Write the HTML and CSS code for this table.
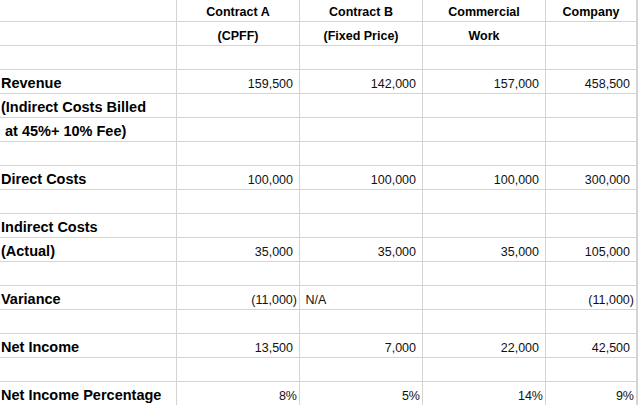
FILE: index.html
```html
<!DOCTYPE html>
<html>
<head>
<meta charset="utf-8">
<link rel="stylesheet" href="styles.css">
</head>
<body>
<div class="sheet">
  <div class="c"></div><div class="c hd">Contract A</div><div class="c hd">Contract B</div><div class="c hd">Commercial</div><div class="c hd">Company</div><div class="c"></div>
  <div class="c"></div><div class="c hd">(CPFF)</div><div class="c hd">(Fixed Price)</div><div class="c hd">Work</div><div class="c"></div><div class="c"></div>
  <div class="c"></div><div class="c"></div><div class="c"></div><div class="c"></div><div class="c"></div><div class="c"></div>
  <div class="c lbl">Revenue</div><div class="c num">159,500</div><div class="c num">142,000</div><div class="c num">157,000</div><div class="c num">458,500</div><div class="c"></div>
  <div class="c lbl">(Indirect Costs Billed</div><div class="c"></div><div class="c"></div><div class="c"></div><div class="c"></div><div class="c"></div>
  <div class="c lbl"> at 45%+ 10% Fee)</div><div class="c"></div><div class="c"></div><div class="c"></div><div class="c"></div><div class="c"></div>
  <div class="c"></div><div class="c"></div><div class="c"></div><div class="c"></div><div class="c"></div><div class="c"></div>
  <div class="c lbl">Direct Costs</div><div class="c num">100,000</div><div class="c num">100,000</div><div class="c num">100,000</div><div class="c num">300,000</div><div class="c"></div>
  <div class="c"></div><div class="c"></div><div class="c"></div><div class="c"></div><div class="c"></div><div class="c"></div>
  <div class="c lbl">Indirect Costs</div><div class="c"></div><div class="c"></div><div class="c"></div><div class="c"></div><div class="c"></div>
  <div class="c lbl">(Actual)</div><div class="c num">35,000</div><div class="c num">35,000</div><div class="c num">35,000</div><div class="c num">105,000</div><div class="c"></div>
  <div class="c"></div><div class="c"></div><div class="c"></div><div class="c"></div><div class="c"></div><div class="c"></div>
  <div class="c lbl">Variance</div><div class="c num neg">(11,000)</div><div class="c txt"> N/A</div><div class="c"></div><div class="c num neg">(11,000)</div><div class="c"></div>
  <div class="c"></div><div class="c"></div><div class="c"></div><div class="c"></div><div class="c"></div><div class="c"></div>
  <div class="c lbl">Net Income</div><div class="c num">13,500</div><div class="c num">7,000</div><div class="c num">22,000</div><div class="c num">42,500</div><div class="c"></div>
  <div class="c"></div><div class="c"></div><div class="c"></div><div class="c"></div><div class="c"></div><div class="c"></div>
  <div class="c lbl">Net Income Percentage</div><div class="c num pct">8%</div><div class="c num pct">5%</div><div class="c num pct">14%</div><div class="c num pct">9%</div><div class="c"></div>
</div>
</body>
</html>
```
FILE: styles.css
```css
html, body {
  margin: 0;
  padding: 0;
  background: #ffffff;
  overflow: hidden;
}
.sheet {
  display: grid;
  grid-template-columns: 177px 123px 123px 123px 91px 1fr;
  grid-template-rows: 22px repeat(16, 24px);
  font-family: "Liberation Sans", Arial, sans-serif;
  color: #000000;
}
.c {
  box-sizing: border-box;
  border-right: 1px solid #d4d4d4;
  border-bottom: 1px solid #d4d4d4;
  display: flex;
  align-items: flex-end;
  padding-bottom: 3px;
  line-height: 1;
  white-space: pre;
  overflow: visible;
  font-size: 12.5px;
}
.lbl {
  font-weight: bold;
  font-size: 14.5px;
  padding-left: 1px;
}
.hd {
  font-weight: bold;
  font-size: 12.5px;
  justify-content: center;
}
.num {
  justify-content: flex-end;
  padding-right: 6px;
  color: #111111;
}
.neg, .pct {
  padding-right: 2px;
}
.txt {
  padding-left: 2px;
  color: #111111;
}
```
